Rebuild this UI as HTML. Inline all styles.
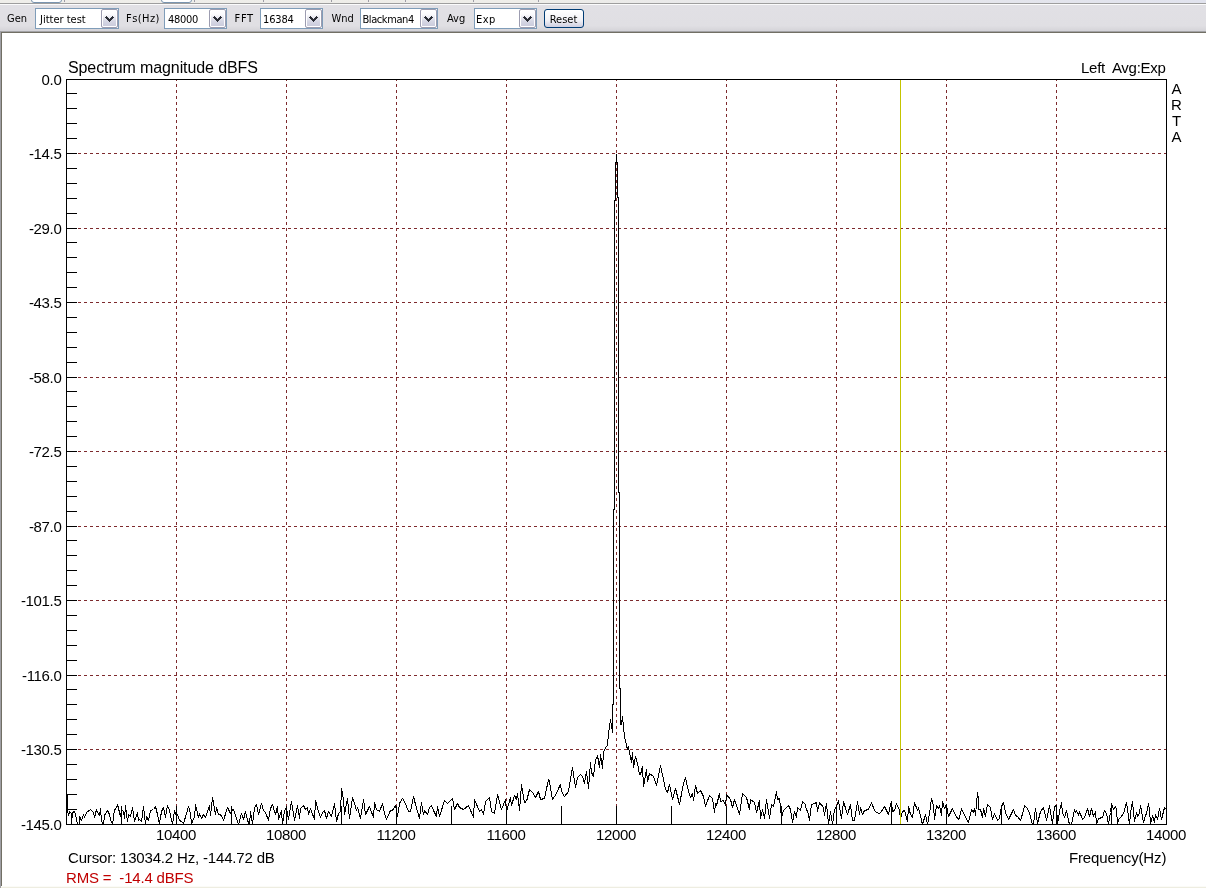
<!DOCTYPE html>
<html><head><meta charset="utf-8"><title>ARTA</title>
<style>
html,body{margin:0;padding:0}
body{width:1206px;height:888px;position:relative;overflow:hidden;background:#fff;font-family:"Liberation Sans",sans-serif}
#top{position:absolute;left:0;top:0;width:1206px;height:3px;background:linear-gradient(to right,#efeeea 0,#eeede9 45%,#e8e8ea 60%,#e1e3ee 100%)}
#top b{position:absolute;top:-5px;height:8px;border:1px solid #7a95b0;border-radius:3px;background:#fff;box-sizing:border-box}
#top u{position:absolute;top:0;height:2px;width:1px;background:#9d9ca6}
#l1{position:absolute;left:0;top:3px;width:1206px;height:1px;background:#9e9e9e}
#l2{position:absolute;left:0;top:4px;width:1206px;height:1px;background:#fbfbfc}
#tb{position:absolute;left:0;top:5px;width:1206px;height:26px;background:linear-gradient(#e1e0e5 0,#e0dfe3 80%,#d4d3d8 100%);font-family:"DejaVu Sans Condensed","DejaVu Sans","Liberation Sans",sans-serif;font-size:11px;color:#000}
#tb .lb{position:absolute;top:7px;margin-left:-1px;line-height:13px;white-space:pre}
.cb{position:absolute;top:3px;height:19px;border:1px solid #7f9db9;background:#fff}
.cb span{position:absolute;left:4px;top:4px;line-height:13px;white-space:pre}
.cb i{position:absolute;right:0;top:0;width:17px;height:19px;border-radius:2px;background:linear-gradient(#fff 0,#fbfbfd 25%,#d6d7e4 65%,#c9cadb 100%);box-shadow:inset 0 0 0 1px #fff;box-sizing:border-box;border:1px solid #9c9cb0}
.cb i svg{position:absolute;left:-1px;top:-1px}
#rs{position:absolute;left:544px;top:4px;width:40px;height:19px;box-sizing:border-box;border:1px solid #003c74;border-radius:3px;background:linear-gradient(#fff,#f2f2f6 60%,#cfcfe0);text-align:center;line-height:19px}
#edge1{position:absolute;left:0;top:31px;width:1206px;height:1px;background:#a3a3a6}
#edge2{position:absolute;left:1px;top:32px;width:1205px;height:1px;background:#716f64}
#edge3{position:absolute;left:0;top:31px;width:1px;height:857px;background:#9f9fa4}
#edge4{position:absolute;left:1px;top:32px;width:1px;height:855px;background:#716f64}
#bot{position:absolute;left:1px;top:886px;width:1205px;height:2px;background:linear-gradient(#fbfbf7 0,#fbfbf7 50%,#eeede1 50%,#eeede1 100%)}
.t,#tb{will-change:transform}
.t{position:absolute;font-size:15px;line-height:17px;color:#000;white-space:pre}
.yl{left:0;width:61.4px;text-align:right;letter-spacing:-0.34px}
.xl{top:826px;width:60px;text-align:center;letter-spacing:-0.34px}
</style></head><body>
<div id="top"><b style="left:31px;width:31px"></b><b style="left:161px;width:31px"></b><u style="left:64px"></u><u style="left:194px"></u><u style="left:263px"></u><u style="left:331px"></u><u style="left:368px"></u><u style="left:405px"></u><u style="left:473px"></u><u style="left:538px"></u></div>
<div id="l1"></div><div id="l2"></div>
<div id="tb">
<span class="lb" style="left:8px">Gen</span><div class="cb" style="left:35px;width:82px"><span style="margin-left:0px;letter-spacing:0px">Jitter test</span><i><svg width="17" height="19" viewBox="0 0 17 19" shape-rendering="crispEdges"><path d="M5 7h1v1h-1zM11 7h1v1h-1zM4 8h3v1h-3zM10 8h3v1h-3zM5 9h3v1h-3zM9 9h3v1h-3zM6 10h5v1h-5zM7 11h3v1h-3zM8 12h1v1h-1z" fill="#2b2e36"/></svg></i></div>
<span class="lb" style="left:127px;letter-spacing:0.45px">Fs(Hz)</span><div class="cb" style="left:164px;width:61px"><span style="margin-left:-1px;letter-spacing:-0.3px">48000</span><i><svg width="17" height="19" viewBox="0 0 17 19" shape-rendering="crispEdges"><path d="M5 7h1v1h-1zM11 7h1v1h-1zM4 8h3v1h-3zM10 8h3v1h-3zM5 9h3v1h-3zM9 9h3v1h-3zM6 10h5v1h-5zM7 11h3v1h-3zM8 12h1v1h-1z" fill="#2b2e36"/></svg></i></div>
<span class="lb" style="left:235.5px;letter-spacing:0.7px">FFT</span><div class="cb" style="left:260px;width:61px"><span style="margin-left:-2px;letter-spacing:-0.15px">16384</span><i><svg width="17" height="19" viewBox="0 0 17 19" shape-rendering="crispEdges"><path d="M5 7h1v1h-1zM11 7h1v1h-1zM4 8h3v1h-3zM10 8h3v1h-3zM5 9h3v1h-3zM9 9h3v1h-3zM6 10h5v1h-5zM7 11h3v1h-3zM8 12h1v1h-1z" fill="#2b2e36"/></svg></i></div>
<span class="lb" style="left:332.5px">Wnd</span><div class="cb" style="left:360px;width:76px"><span style="margin-left:-2.5px;letter-spacing:-0.42px">Blackman4</span><i><svg width="17" height="19" viewBox="0 0 17 19" shape-rendering="crispEdges"><path d="M5 7h1v1h-1zM11 7h1v1h-1zM4 8h3v1h-3zM10 8h3v1h-3zM5 9h3v1h-3zM9 9h3v1h-3zM6 10h5v1h-5zM7 11h3v1h-3zM8 12h1v1h-1z" fill="#2b2e36"/></svg></i></div>
<span class="lb" style="left:448px">Avg</span><div class="cb" style="left:474px;width:61px"><span style="margin-left:-3px;letter-spacing:0.4px">Exp</span><i><svg width="17" height="19" viewBox="0 0 17 19" shape-rendering="crispEdges"><path d="M5 7h1v1h-1zM11 7h1v1h-1zM4 8h3v1h-3zM10 8h3v1h-3zM5 9h3v1h-3zM9 9h3v1h-3zM6 10h5v1h-5zM7 11h3v1h-3zM8 12h1v1h-1z" fill="#2b2e36"/></svg></i></div>
<div id="rs"><span style="position:relative;left:-0.5px">Reset</span></div>
</div>
<div id="edge1"></div><div id="edge2"></div><div id="edge3"></div><div id="edge4"></div><div id="bot"></div>
<svg width="1206" height="888" viewBox="0 0 1206 888" style="position:absolute;left:0;top:0" shape-rendering="crispEdges">
<line x1="176.5" y1="80" x2="176.5" y2="824" stroke="#7d2a2d" stroke-width="1" stroke-dasharray="3 3" stroke-dashoffset="2"/>
<line x1="286.5" y1="80" x2="286.5" y2="824" stroke="#7d2a2d" stroke-width="1" stroke-dasharray="3 3" stroke-dashoffset="2"/>
<line x1="396.5" y1="80" x2="396.5" y2="824" stroke="#7d2a2d" stroke-width="1" stroke-dasharray="3 3" stroke-dashoffset="2"/>
<line x1="506.5" y1="80" x2="506.5" y2="824" stroke="#7d2a2d" stroke-width="1" stroke-dasharray="3 3" stroke-dashoffset="2"/>
<line x1="616.5" y1="80" x2="616.5" y2="824" stroke="#7d2a2d" stroke-width="1" stroke-dasharray="3 3" stroke-dashoffset="2"/>
<line x1="726.5" y1="80" x2="726.5" y2="824" stroke="#7d2a2d" stroke-width="1" stroke-dasharray="3 3" stroke-dashoffset="2"/>
<line x1="836.5" y1="80" x2="836.5" y2="824" stroke="#7d2a2d" stroke-width="1" stroke-dasharray="3 3" stroke-dashoffset="2"/>
<line x1="946.5" y1="80" x2="946.5" y2="824" stroke="#7d2a2d" stroke-width="1" stroke-dasharray="3 3" stroke-dashoffset="2"/>
<line x1="1056.5" y1="80" x2="1056.5" y2="824" stroke="#7d2a2d" stroke-width="1" stroke-dasharray="3 3" stroke-dashoffset="2"/>
<line x1="78" y1="153.5" x2="1166" y2="153.5" stroke="#7d2a2d" stroke-width="1" stroke-dasharray="3 3"/>
<line x1="78" y1="228.5" x2="1166" y2="228.5" stroke="#7d2a2d" stroke-width="1" stroke-dasharray="3 3"/>
<line x1="78" y1="302.5" x2="1166" y2="302.5" stroke="#7d2a2d" stroke-width="1" stroke-dasharray="3 3"/>
<line x1="78" y1="377.5" x2="1166" y2="377.5" stroke="#7d2a2d" stroke-width="1" stroke-dasharray="3 3"/>
<line x1="78" y1="451.5" x2="1166" y2="451.5" stroke="#7d2a2d" stroke-width="1" stroke-dasharray="3 3"/>
<line x1="78" y1="526.5" x2="1166" y2="526.5" stroke="#7d2a2d" stroke-width="1" stroke-dasharray="3 3"/>
<line x1="78" y1="600.5" x2="1166" y2="600.5" stroke="#7d2a2d" stroke-width="1" stroke-dasharray="3 3"/>
<line x1="78" y1="675.5" x2="1166" y2="675.5" stroke="#7d2a2d" stroke-width="1" stroke-dasharray="3 3"/>
<line x1="78" y1="749.5" x2="1166" y2="749.5" stroke="#7d2a2d" stroke-width="1" stroke-dasharray="3 3"/>
<rect x="66.5" y="79.5" width="1100" height="745" fill="none" stroke="#000" stroke-width="1"/>
<line x1="66" y1="79.5" x2="77" y2="79.5" stroke="#000"/>
<line x1="66" y1="93.5" x2="77" y2="93.5" stroke="#000"/>
<line x1="66" y1="108.5" x2="77" y2="108.5" stroke="#000"/>
<line x1="66" y1="123.5" x2="77" y2="123.5" stroke="#000"/>
<line x1="66" y1="138.5" x2="77" y2="138.5" stroke="#000"/>
<line x1="66" y1="153.5" x2="77" y2="153.5" stroke="#000"/>
<line x1="66" y1="168.5" x2="77" y2="168.5" stroke="#000"/>
<line x1="66" y1="183.5" x2="77" y2="183.5" stroke="#000"/>
<line x1="66" y1="198.5" x2="77" y2="198.5" stroke="#000"/>
<line x1="66" y1="213.5" x2="77" y2="213.5" stroke="#000"/>
<line x1="66" y1="228.5" x2="77" y2="228.5" stroke="#000"/>
<line x1="66" y1="242.5" x2="77" y2="242.5" stroke="#000"/>
<line x1="66" y1="257.5" x2="77" y2="257.5" stroke="#000"/>
<line x1="66" y1="272.5" x2="77" y2="272.5" stroke="#000"/>
<line x1="66" y1="287.5" x2="77" y2="287.5" stroke="#000"/>
<line x1="66" y1="302.5" x2="77" y2="302.5" stroke="#000"/>
<line x1="66" y1="317.5" x2="77" y2="317.5" stroke="#000"/>
<line x1="66" y1="332.5" x2="77" y2="332.5" stroke="#000"/>
<line x1="66" y1="347.5" x2="77" y2="347.5" stroke="#000"/>
<line x1="66" y1="362.5" x2="77" y2="362.5" stroke="#000"/>
<line x1="66" y1="377.5" x2="77" y2="377.5" stroke="#000"/>
<line x1="66" y1="391.5" x2="77" y2="391.5" stroke="#000"/>
<line x1="66" y1="406.5" x2="77" y2="406.5" stroke="#000"/>
<line x1="66" y1="421.5" x2="77" y2="421.5" stroke="#000"/>
<line x1="66" y1="436.5" x2="77" y2="436.5" stroke="#000"/>
<line x1="66" y1="451.5" x2="77" y2="451.5" stroke="#000"/>
<line x1="66" y1="466.5" x2="77" y2="466.5" stroke="#000"/>
<line x1="66" y1="481.5" x2="77" y2="481.5" stroke="#000"/>
<line x1="66" y1="496.5" x2="77" y2="496.5" stroke="#000"/>
<line x1="66" y1="511.5" x2="77" y2="511.5" stroke="#000"/>
<line x1="66" y1="526.5" x2="77" y2="526.5" stroke="#000"/>
<line x1="66" y1="540.5" x2="77" y2="540.5" stroke="#000"/>
<line x1="66" y1="555.5" x2="77" y2="555.5" stroke="#000"/>
<line x1="66" y1="570.5" x2="77" y2="570.5" stroke="#000"/>
<line x1="66" y1="585.5" x2="77" y2="585.5" stroke="#000"/>
<line x1="66" y1="600.5" x2="77" y2="600.5" stroke="#000"/>
<line x1="66" y1="615.5" x2="77" y2="615.5" stroke="#000"/>
<line x1="66" y1="630.5" x2="77" y2="630.5" stroke="#000"/>
<line x1="66" y1="645.5" x2="77" y2="645.5" stroke="#000"/>
<line x1="66" y1="660.5" x2="77" y2="660.5" stroke="#000"/>
<line x1="66" y1="675.5" x2="77" y2="675.5" stroke="#000"/>
<line x1="66" y1="689.5" x2="77" y2="689.5" stroke="#000"/>
<line x1="66" y1="704.5" x2="77" y2="704.5" stroke="#000"/>
<line x1="66" y1="719.5" x2="77" y2="719.5" stroke="#000"/>
<line x1="66" y1="734.5" x2="77" y2="734.5" stroke="#000"/>
<line x1="66" y1="749.5" x2="77" y2="749.5" stroke="#000"/>
<line x1="66" y1="764.5" x2="77" y2="764.5" stroke="#000"/>
<line x1="66" y1="779.5" x2="77" y2="779.5" stroke="#000"/>
<line x1="66" y1="794.5" x2="77" y2="794.5" stroke="#000"/>
<line x1="66" y1="809.5" x2="77" y2="809.5" stroke="#000"/>
<line x1="66" y1="824.5" x2="77" y2="824.5" stroke="#000"/>
<line x1="121.5" y1="806" x2="121.5" y2="824" stroke="#000"/>
<line x1="176.5" y1="806" x2="176.5" y2="824" stroke="#000"/>
<line x1="231.5" y1="806" x2="231.5" y2="824" stroke="#000"/>
<line x1="286.5" y1="806" x2="286.5" y2="824" stroke="#000"/>
<line x1="341.5" y1="806" x2="341.5" y2="824" stroke="#000"/>
<line x1="396.5" y1="806" x2="396.5" y2="824" stroke="#000"/>
<line x1="451.5" y1="806" x2="451.5" y2="824" stroke="#000"/>
<line x1="506.5" y1="806" x2="506.5" y2="824" stroke="#000"/>
<line x1="561.5" y1="806" x2="561.5" y2="824" stroke="#000"/>
<line x1="616.5" y1="806" x2="616.5" y2="824" stroke="#000"/>
<line x1="671.5" y1="806" x2="671.5" y2="824" stroke="#000"/>
<line x1="726.5" y1="806" x2="726.5" y2="824" stroke="#000"/>
<line x1="781.5" y1="806" x2="781.5" y2="824" stroke="#000"/>
<line x1="836.5" y1="806" x2="836.5" y2="824" stroke="#000"/>
<line x1="891.5" y1="806" x2="891.5" y2="824" stroke="#000"/>
<line x1="946.5" y1="806" x2="946.5" y2="824" stroke="#000"/>
<line x1="1001.5" y1="806" x2="1001.5" y2="824" stroke="#000"/>
<line x1="1056.5" y1="806" x2="1056.5" y2="824" stroke="#000"/>
<line x1="1111.5" y1="806" x2="1111.5" y2="824" stroke="#000"/>
<polyline points="67.5,794.5 67.5,810.5 68.5,815.5 69.5,811.5 71.5,813.5 71.5,824.5 72.5,812.5 74.5,811.5 76.5,818.5 77.5,824.5 79.5,824.5 79.5,816.5 81.5,820.5 83.5,814.5 84.5,817.5 86.5,812.5 90.5,809.5 93.5,812.5 94.5,817.5 96.5,809.5 97.5,812.5 99.5,815.5 100.5,808.5 101.5,821.5 103.5,824.5 104.5,815.5 107.5,810.5 109.5,814.5 110.5,819.5 112.5,824.5 114.5,809.5 115.5,809.5 117.5,804.5 118.5,808.5 120.5,816.5 121.5,809.5 123.5,811.5 124.5,818.5 125.5,805.5 126.5,813.5 127.5,821.5 128.5,814.5 130.5,816.5 132.5,807.5 134.5,821.5 135.5,818.5 137.5,812.5 138.5,820.5 139.5,819.5 141.5,821.5 143.5,806.5 145.5,824.5 146.5,816.5 148.5,820.5 150.5,810.5 153.5,809.5 155.5,806.5 157.5,814.5 159.5,824.5 160.5,816.5 162.5,808.5 163.5,807.5 165.5,817.5 167.5,805.5 169.5,810.5 172.5,824.5 174.5,810.5 175.5,814.5 177.5,814.5 179.5,820.5 181.5,821.5 183.5,823.5 186.5,813.5 188.5,806.5 190.5,813.5 191.5,824.5 193.5,818.5 194.5,817.5 195.5,804.5 197.5,813.5 198.5,817.5 199.5,813.5 201.5,818.5 203.5,814.5 205.5,817.5 207.5,811.5 209.5,805.5 210.5,815.5 212.5,797.5 213.5,802.5 215.5,814.5 216.5,807.5 218.5,814.5 219.5,814.5 221.5,815.5 223.5,820.5 227.5,807.5 228.5,809.5 230.5,813.5 232.5,809.5 233.5,809.5 235.5,815.5 238.5,824.5 241.5,813.5 243.5,819.5 245.5,811.5 247.5,820.5 249.5,824.5 250.5,811.5 252.5,824.5 254.5,807.5 256.5,804.5 258.5,814.5 261.5,803.5 263.5,810.5 265.5,812.5 268.5,820.5 270.5,808.5 272.5,804.5 275.5,814.5 277.5,806.5 278.5,819.5 281.5,810.5 282.5,824.5 284.5,810.5 286.5,807.5 288.5,819.5 291.5,801.5 293.5,813.5 294.5,820.5 297.5,805.5 299.5,818.5 300.5,808.5 303.5,805.5 305.5,809.5 307.5,807.5 308.5,814.5 310.5,808.5 314.5,819.5 315.5,800.5 318.5,811.5 320.5,817.5 322.5,812.5 324.5,810.5 326.5,818.5 328.5,811.5 331.5,816.5 334.5,803.5 336.5,821.5 338.5,813.5 340.5,811.5 341.5,788.5 343.5,799.5 344.5,814.5 347.5,798.5 349.5,818.5 352.5,797.5 354.5,803.5 356.5,810.5 357.5,807.5 360.5,818.5 363.5,799.5 365.5,814.5 369.5,806.5 373.5,817.5 374.5,802.5 376.5,809.5 379.5,811.5 382.5,803.5 384.5,813.5 386.5,819.5 390.5,810.5 392.5,810.5 395.5,805.5 397.5,816.5 399.5,803.5 402.5,798.5 404.5,801.5 408.5,811.5 410.5,811.5 413.5,796.5 415.5,804.5 419.5,818.5 421.5,802.5 423.5,814.5 424.5,810.5 427.5,814.5 429.5,807.5 431.5,805.5 433.5,810.5 436.5,816.5 437.5,806.5 439.5,816.5 440.5,813.5 444.5,800.5 447.5,803.5 452.5,798.5 454.5,809.5 457.5,803.5 459.5,807.5 463.5,809.5 468.5,805.5 473.5,817.5 474.5,799.5 479.5,811.5 481.5,809.5 483.5,814.5 485.5,801.5 489.5,797.5 491.5,811.5 494.5,813.5 497.5,794.5 501.5,809.5 505.5,799.5 506.5,811.5 510.5,797.5 511.5,805.5 514.5,795.5 516.5,799.5 517.5,793.5 519.5,810.5 521.5,784.5 524.5,802.5 526.5,801.5 529.5,789.5 532.5,792.5 535.5,797.5 538.5,791.5 540.5,799.5 544.5,798.5 548.5,779.5 549.5,781.5 552.5,799.5 556.5,793.5 558.5,788.5 560.5,784.5 561.5,791.5 564.5,796.5 568.5,791.5 572.5,767.5 575.5,787.5 577.5,777.5 580.5,774.5 582.5,776.5 584.5,783.5 586.5,771.5 588.5,788.5 590.5,762.5 591.5,772.5 593.5,776.5 595.5,760.5 597.5,755.5 599.5,767.5 600.5,754.5 602.5,768.5 603.5,752.5 605.5,747.5 607.5,745.5 608.5,733.5 610.5,719.5 612.5,731.5 612.5,732.5 612.5,704.5 613.5,704.5 613.5,509.5 614.5,509.5 614.5,200.5 615.5,200.5 615.5,162.5 616.5,162.5 616.5,153.5 616.5,162.5 617.5,162.5 617.5,197.5 618.5,197.5 618.5,492.5 619.5,492.5 619.5,688.5 620.5,688.5 620.5,724.5 621.5,724.5 622.5,716.5 624.5,736.5 626.5,745.5 627.5,749.5 628.5,746.5 629.5,752.5 631.5,762.5 632.5,752.5 633.5,767.5 635.5,756.5 637.5,763.5 639.5,774.5 640.5,774.5 642.5,766.5 643.5,786.5 646.5,769.5 647.5,781.5 649.5,773.5 653.5,776.5 656.5,785.5 660.5,765.5 663.5,779.5 665.5,789.5 667.5,792.5 669.5,784.5 672.5,799.5 675.5,788.5 679.5,804.5 683.5,783.5 685.5,777.5 688.5,791.5 690.5,797.5 692.5,793.5 693.5,800.5 695.5,785.5 697.5,793.5 700.5,790.5 703.5,796.5 705.5,806.5 709.5,795.5 712.5,798.5 714.5,812.5 715.5,803.5 716.5,805.5 719.5,793.5 720.5,801.5 723.5,800.5 725.5,805.5 726.5,794.5 730.5,799.5 732.5,807.5 734.5,799.5 737.5,808.5 739.5,814.5 742.5,793.5 746.5,797.5 749.5,809.5 750.5,799.5 754.5,802.5 756.5,812.5 759.5,800.5 760.5,818.5 762.5,809.5 764.5,818.5 766.5,799.5 769.5,818.5 771.5,804.5 773.5,806.5 776.5,791.5 777.5,799.5 779.5,798.5 781.5,817.5 783.5,810.5 788.5,805.5 790.5,809.5 792.5,822.5 794.5,811.5 796.5,817.5 797.5,807.5 800.5,810.5 802.5,801.5 805.5,804.5 806.5,810.5 807.5,810.5 809.5,820.5 811.5,804.5 814.5,803.5 816.5,802.5 817.5,811.5 819.5,802.5 823.5,807.5 824.5,815.5 826.5,803.5 828.5,824.5 830.5,811.5 832.5,824.5 834.5,809.5 836.5,806.5 838.5,800.5 841.5,818.5 843.5,801.5 847.5,814.5 850.5,804.5 852.5,820.5 854.5,820.5 857.5,801.5 859.5,814.5 860.5,807.5 862.5,814.5 864.5,810.5 868.5,809.5 871.5,802.5 874.5,810.5 876.5,812.5 879.5,813.5 881.5,811.5 884.5,806.5 888.5,814.5 890.5,804.5 891.5,801.5 892.5,811.5 894.5,810.5 896.5,803.5 899.5,810.5 900.5,818.5 902.5,811.5 904.5,810.5 907.5,821.5 908.5,806.5 910.5,814.5 912.5,817.5 914.5,802.5 917.5,810.5 918.5,807.5 922.5,824.5 925.5,814.5 927.5,824.5 929.5,813.5 931.5,798.5 933.5,805.5 934.5,819.5 936.5,805.5 938.5,808.5 939.5,805.5 941.5,815.5 942.5,801.5 944.5,808.5 946.5,804.5 948.5,816.5 952.5,808.5 955.5,815.5 958.5,819.5 959.5,817.5 961.5,808.5 965.5,817.5 968.5,822.5 971.5,809.5 973.5,812.5 974.5,808.5 975.5,815.5 977.5,792.5 978.5,799.5 978.5,809.5 980.5,809.5 982.5,817.5 983.5,808.5 985.5,816.5 987.5,804.5 990.5,807.5 992.5,819.5 994.5,813.5 997.5,820.5 999.5,818.5 1001.5,806.5 1003.5,802.5 1005.5,812.5 1008.5,819.5 1010.5,815.5 1013.5,809.5 1015.5,815.5 1017.5,816.5 1020.5,820.5 1023.5,810.5 1024.5,805.5 1027.5,808.5 1029.5,813.5 1032.5,824.5 1033.5,824.5 1035.5,808.5 1037.5,823.5 1040.5,811.5 1043.5,807.5 1046.5,820.5 1049.5,805.5 1052.5,823.5 1054.5,806.5 1056.5,805.5 1057.5,824.5 1059.5,811.5 1061.5,802.5 1062.5,812.5 1064.5,817.5 1066.5,810.5 1068.5,820.5 1069.5,824.5 1071.5,824.5 1074.5,809.5 1075.5,812.5 1076.5,810.5 1078.5,815.5 1079.5,811.5 1082.5,819.5 1084.5,817.5 1087.5,808.5 1089.5,816.5 1091.5,808.5 1093.5,816.5 1095.5,811.5 1096.5,824.5 1098.5,818.5 1102.5,817.5 1104.5,810.5 1106.5,813.5 1108.5,824.5 1110.5,812.5 1111.5,803.5 1113.5,809.5 1115.5,806.5 1116.5,809.5 1117.5,824.5 1118.5,819.5 1120.5,817.5 1123.5,813.5 1126.5,802.5 1127.5,809.5 1129.5,824.5 1130.5,813.5 1132.5,801.5 1133.5,811.5 1134.5,821.5 1136.5,812.5 1137.5,816.5 1139.5,813.5 1140.5,805.5 1143.5,822.5 1145.5,815.5 1146.5,813.5 1148.5,803.5 1149.5,809.5 1150.5,824.5 1152.5,815.5 1154.5,822.5 1155.5,814.5 1157.5,819.5 1159.5,808.5 1161.5,819.5 1164.5,807.5 1165.5,809.5" fill="none" stroke="#000" stroke-width="1" stroke-linejoin="bevel"/>
<line x1="900.5" y1="80" x2="900.5" y2="824" stroke="#c4c400"/>
</svg>
<div class="t" style="left:68px;top:59px;font-size:16px;line-height:18px;letter-spacing:-0.1px" id="title">Spectrum magnitude dBFS</div>
<div class="t" style="left:1081px;top:59px;letter-spacing:-0.27px" id="lavg">Left  Avg:Exp</div>
<div class="t" style="left:1171px;top:81px;line-height:16px;width:11px;text-align:center" id="arta">A<br>R<br>T<br>A</div>
<div class="t yl" style="top:71px">0.0</div>
<div class="t yl" style="top:145px">-14.5</div>
<div class="t yl" style="top:220px">-29.0</div>
<div class="t yl" style="top:294px">-43.5</div>
<div class="t yl" style="top:369px">-58.0</div>
<div class="t yl" style="top:443px">-72.5</div>
<div class="t yl" style="top:518px">-87.0</div>
<div class="t yl" style="top:592px">-101.5</div>
<div class="t yl" style="top:667px">-116.0</div>
<div class="t yl" style="top:741px">-130.5</div>
<div class="t yl" style="top:816px">-145.0</div>
<div class="t xl" style="left:146px">10400</div>
<div class="t xl" style="left:256px">10800</div>
<div class="t xl" style="left:366px">11200</div>
<div class="t xl" style="left:476px">11600</div>
<div class="t xl" style="left:586px">12000</div>
<div class="t xl" style="left:696px">12400</div>
<div class="t xl" style="left:806px">12800</div>
<div class="t xl" style="left:916px">13200</div>
<div class="t xl" style="left:1026px">13600</div>
<div class="t xl" style="left:1136px">14000</div>
<div class="t" style="left:68px;top:849px;letter-spacing:-0.17px" id="cursor">Cursor: 13034.2 Hz, -144.72 dB</div>
<div class="t" style="left:1069px;top:849px;letter-spacing:-0.15px" id="freq">Frequency(Hz)</div>
<div class="t" style="left:66px;top:869px;color:#c00000;letter-spacing:-0.18px" id="rms">RMS =  -14.4 dBFS</div>
</body></html>
